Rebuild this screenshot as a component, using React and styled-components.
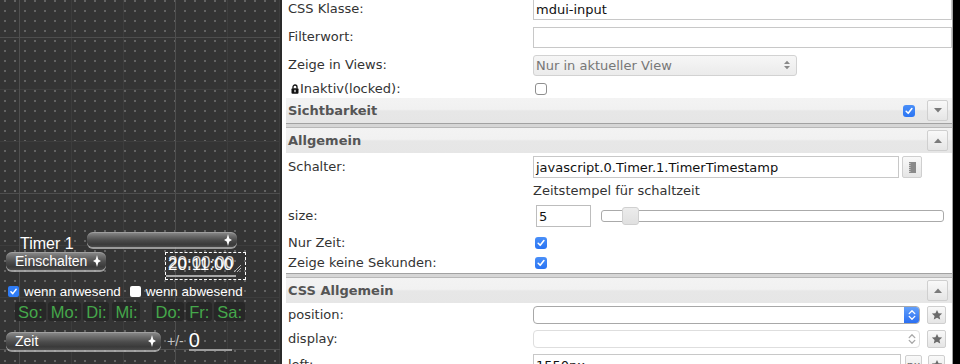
import React from "react";
import styled, { createGlobalStyle } from "styled-components";

const Global = createGlobalStyle`
  html, body { margin: 0; padding: 0; background: #000; overflow: hidden; }
  #root { width: 960px; height: 364px; }
`;

const Screen = styled.div`
  display: flex;
  width: 960px;
  height: 364px;
  overflow: hidden;
  background: #000;
`;

/* ---------- left: editor canvas ---------- */
const Canvas = styled.div`
  position: relative;
  width: 280px;
  height: 364px;
  flex: none;
  background-color: #343434;
  background-image:
    linear-gradient(to right, #4e4e4e 1px, transparent 1px),
    linear-gradient(to bottom, #4e4e4e 1px, transparent 1px),
    linear-gradient(to right, #3d3d3d 1px, transparent 1px),
    linear-gradient(to bottom, #3d3d3d 1px, transparent 1px),
    radial-gradient(circle, #636363 0.9px, transparent 1.3px);
  background-size: 156px 156px, 156px 156px, 52px 52px, 52px 52px, 10px 10px;
  background-position: 19px 0, 0 37px, 19px 0, 0 37px, 0 -4px;
  font-family: "Liberation Sans", Arial, sans-serif;
  color: #fff;
`;

const Widget = styled.div`
  position: absolute;
  left: 0;
  top: 231px;
  width: 250px;
  display: flex;
  flex-direction: column;
`;

const WRow = styled.div`
  display: flex;
  align-items: ${(p) => p.$align || "center"};
  height: ${(p) => p.$h}px;
  margin-top: ${(p) => p.$mt || 0}px;
`;

const TimerTitle = styled.div`
  width: 67px;
  margin: 5px 0 0 20px;
  font-size: 16px;
  line-height: 16px;
  white-space: nowrap;
`;

const DarkSelect = styled.div`
  box-sizing: border-box;
  width: ${(p) => p.$w}px;
  height: ${(p) => p.$h}px;
  margin-left: ${(p) => p.$ml || 0}px;
  margin-top: ${(p) => p.$mt || 0}px;
  padding: 0 5px 0 9px;
  display: flex;
  align-items: center;
  justify-content: space-between;
  border-radius: 6px;
  background: linear-gradient(
    to bottom,
    #8e8e8e 0%,
    #6a6a6a 28%,
    #4c4c4c 55%,
    #3a3a3a 82%,
    #4a4a4a 100%
  );
  box-shadow: inset 0 1px 0 rgba(255, 255, 255, 0.18),
    0 2px 0 rgba(190, 190, 190, 0.75);
  color: #fff;
  font-size: 14px;
  line-height: 14px;
`;

const TimeBox = styled.div`
  position: relative;
  box-sizing: border-box;
  width: 81px;
  height: 28px;
  margin-left: 59px;
  border: 1px dashed #fff;
`;

const TimeText = styled.span`
  position: absolute;
  left: 2px;
  top: ${(p) => p.$top}px;
  font-size: 17px;
  line-height: 17px;
  color: #fff;
  opacity: ${(p) => p.$o};
  white-space: nowrap;
`;

const TimeLine = styled.div`
  position: absolute;
  left: 0;
  right: 9px;
  bottom: 2px;
  height: 2px;
  background: #a9a9a9;
`;

const Grip = styled.svg`
  position: absolute;
  right: 4px;
  bottom: 7px;
`;

const CanvasCheck = styled.span`
  box-sizing: border-box;
  width: 11px;
  height: 11px;
  margin-left: ${(p) => p.$ml}px;
  border-radius: 2px;
  display: inline-flex;
  align-items: center;
  justify-content: center;
  background: ${(p) => (p.$on ? "#2f7cf6" : "#fff")};
`;

const CanvasLabel = styled.span`
  margin-left: 5px;
  font-size: 13.4px;
  color: #fff;
  white-space: nowrap;
`;

const Days = styled.div`
  display: flex;
  gap: 2px;
  padding-left: 15px;
  height: 19px;
`;

const DayBox = styled.div`
  display: flex;
  align-items: center;
  padding: 0 3px;
  margin-left: ${(p) => p.$ml || 0}px;
  border-radius: 3px;
  background: #272727;
  color: #45a84b;
  font-size: 16.5px;
  line-height: 16px;
`;

const PlusMinus = styled.span`
  margin-left: 6px;
  color: #c4c4c4;
  font-size: 14px;
`;

const ZeroField = styled.div`
  box-sizing: border-box;
  width: 43px;
  height: 20px;
  margin-left: 5px;
  border-bottom: 2px solid #9d9d9d;
  font-size: 20px;
  line-height: 18px;
  color: #fff;
`;

/* ---------- right: property panel ---------- */
const Panel = styled.div`
  flex: none;
  width: 670px;
  height: 364px;
  overflow: hidden;
  background: #fff;
  border-left: 2px solid #2a2a2a;
  border-right: 1px solid #a3a3a3;
  font-family: "DejaVu Sans", Verdana, sans-serif;
  font-size: 13px;
  color: #333;
`;

const PanelInner = styled.div`
  margin-top: -5px;
  padding-left: 4px;
  display: flex;
  flex-direction: column;
`;

const Row = styled.div`
  display: grid;
  grid-template-columns: 247px 1fr;
  align-items: ${(p) => p.$align || "center"};
  height: ${(p) => p.$h}px;
`;

const Label = styled.div`
  padding-left: ${(p) => p.$pl ?? 2}px;
  margin-top: ${(p) => p.$mt || 0}px;
  display: flex;
  align-items: center;
  gap: 1px;
  white-space: nowrap;
  line-height: 16px;
`;

const Cell = styled.div`
  display: flex;
  align-items: center;
  margin-top: ${(p) => p.$mt || 0}px;
`;

const TextInput = styled.div`
  box-sizing: border-box;
  width: ${(p) => p.$w}px;
  height: ${(p) => p.$h || 22}px;
  margin-left: ${(p) => p.$ml || 0}px;
  padding-left: 2px;
  display: flex;
  align-items: center;
  border: 1px solid ${(p) => p.$bc || "#c8c8c8"};
  background: #fff;
  color: #111;
  white-space: nowrap;
  overflow: hidden;
`;

const ViewSelect = styled.div`
  box-sizing: border-box;
  width: 264px;
  height: 21px;
  padding: 0 6px 0 2px;
  display: flex;
  align-items: center;
  justify-content: space-between;
  border: 1px solid #d2d2d2;
  border-radius: 3px;
  background: linear-gradient(to bottom, #f6f6f6, #ebebeb);
  color: #777;
`;

const MacSelect = styled.div`
  box-sizing: border-box;
  width: 387px;
  height: 18px;
  display: flex;
  justify-content: flex-end;
  border: 1px solid ${(p) => (p.$active ? "#a8a8a8" : "#dedede")};
  border-radius: 4px;
  background: #fff;
  overflow: hidden;
`;

const MacArrow = styled.div`
  width: 15px;
  display: flex;
  align-items: center;
  justify-content: center;
  background: ${(p) =>
    p.$active ? "linear-gradient(to bottom, #63a0fa, #2b6ff2)" : "transparent"};
`;

const SmallBtn = styled.div`
  box-sizing: border-box;
  width: ${(p) => p.$w}px;
  height: ${(p) => p.$h}px;
  margin-left: ${(p) => p.$ml || 0}px;
  display: flex;
  align-items: center;
  justify-content: center;
  border: 1px solid #cfcfcf;
  border-radius: 2px;
  background: linear-gradient(to bottom, #f9f9f9, #e5e5e5);
  color: #666;
  font-size: 11px;
`;

const Header = styled.div`
  box-sizing: border-box;
  height: 25px;
  display: flex;
  align-items: center;
  padding: 0 4px 0 2px;
  background: linear-gradient(
    to bottom,
    #f3f3f3 0%,
    #f1f1f1 45%,
    #e7e7e7 52%,
    #e6e6e6 100%
  );
  font-weight: bold;
  color: #555;
`;

const HeaderTitle = styled.span`
  flex: 1;
`;

const Separator = styled.div`
  box-sizing: border-box;
  height: 5px;
  background: #d6d6d6;
  border-top: 1px solid #a2a2a2;
  border-bottom: 1px solid #b8b8b8;
`;

const Check = styled.span`
  box-sizing: border-box;
  width: 12px;
  height: 12px;
  margin-left: ${(p) => p.$ml || 0}px;
  margin-right: ${(p) => p.$mr || 0}px;
  display: inline-flex;
  align-items: center;
  justify-content: center;
  border-radius: 3px;
  border: ${(p) => (p.$on ? "none" : "1px solid #8f8f8f")};
  background: ${(p) =>
    p.$on ? "linear-gradient(to bottom, #4a8ff8, #2a74f3)" : "#fff"};
`;

const Hint = styled.div`
  color: #333;
  white-space: nowrap;
`;

const Slider = styled.div`
  position: relative;
  box-sizing: border-box;
  width: 343px;
  height: 12px;
  margin-left: 10px;
  border: 1px solid #aaa;
  border-radius: 3px;
  background: #fff;
`;

const Handle = styled.div`
  position: absolute;
  left: 20px;
  top: -4px;
  box-sizing: border-box;
  width: 17px;
  height: 18px;
  border: 1px solid #d0d0d0;
  border-radius: 3px;
  background: linear-gradient(to bottom, #ececec, #e0e0e0);
`;

/* ---------- icons ---------- */
const UpDown = () => (
  <svg width="8" height="12" viewBox="0 0 8 12">
    <path d="M4 0 L5.3 4.6 L8 6 L5.3 7.4 L4 12 L2.7 7.4 L0 6 L2.7 4.6 Z" fill="#fff" />
  </svg>
);

const Tick = ({ s = 12 }) => (
  <svg width={s} height={s} viewBox="0 0 12 12">
    <path d="M3.2 6.3 L5.2 8.3 L8.9 3.6" stroke="#fff" strokeWidth="1.6" fill="none" strokeLinecap="round" strokeLinejoin="round" />
  </svg>
);

const Tri = ({ up }) => (
  <svg width="8" height="5" viewBox="0 0 8 5">
    <path d={up ? "M0 5 L4 0.5 L8 5 Z" : "M0 0 L8 0 L4 4.5 Z"} fill="#7a7a7a" />
  </svg>
);

const Lock = () => (
  <svg width="8" height="10" viewBox="0 0 8 10">
    <path d="M2 4.5 V3 a2 2 0 0 1 4 0 V4.5" stroke="#111" strokeWidth="1.3" fill="none" />
    <rect x="0.5" y="4.3" width="7" height="5.5" rx="1" fill="#111" />
    <rect x="3.4" y="5.8" width="1.2" height="2.4" fill="#fff" />
  </svg>
);

const SmallUpDown = ({ c = "#888" }) => (
  <svg width="6" height="10" viewBox="0 0 6 10">
    <path d="M0 4 L3 0.8 L6 4 Z M0 6 L3 9.2 L6 6 Z" fill={c} />
  </svg>
);

const Chevrons = ({ c }) => (
  <svg width="8" height="12" viewBox="0 0 8 12">
    <path d="M1.2 4.6 L4 1.8 L6.8 4.6 M1.2 7.4 L4 10.2 L6.8 7.4" stroke={c} strokeWidth="1.3" fill="none" strokeLinecap="round" strokeLinejoin="round" />
  </svg>
);

const Star = () => (
  <svg width="12" height="12" viewBox="0 0 24 24">
    <path d="M12 1.8 L15.1 8.4 L22.3 9.2 L16.9 14.1 L18.4 21.2 L12 17.6 L5.6 21.2 L7.1 14.1 L1.7 9.2 L8.9 8.4 Z" fill="#6b6b6b" />
  </svg>
);

const ListIcon = () => (
  <svg width="7" height="11" viewBox="0 0 7 11">
    <rect x="0" y="0" width="7" height="11" fill="#8a8a8a" />
    <path d="M0 1.5 H1.5 M0 3.5 H1.5 M0 5.5 H1.5 M0 7.5 H1.5 M0 9.5 H1.5" stroke="#d8d8d8" strokeWidth="0.9" />
  </svg>
);

const days = [
  { t: "So:" },
  { t: "Mo:" },
  { t: "Di:" },
  { t: "Mi:", ml: 1 },
  { t: "Do:", ml: 10 },
  { t: "Fr:" },
  { t: "Sa:" },
];

export default function App() {
  return (
    <>
      <Global />
      <Screen>
        <Canvas>
          <Widget>
            <WRow $h={21} $align="flex-start">
              <TimerTitle>Timer 1</TimerTitle>
              <DarkSelect $w={150} $h={15} $mt={1}>
                <span />
                <UpDown />
              </DarkSelect>
            </WRow>
            <WRow $h={32} $align="flex-start">
              <DarkSelect $w={100} $h={18} $ml={6}>
                <span>Einschalten</span>
                <UpDown />
              </DarkSelect>
              <TimeBox>
                <TimeText $top={1} $o={0.85}>20:00:00</TimeText>
                <TimeText $top={3} $o={1}>20:11:00</TimeText>
                <TimeLine />
                <Grip width="7" height="7" viewBox="0 0 7 7">
                  <path d="M7 0 L0 7 M7 3 L3 7 M7 5.5 L5.5 7" stroke="#b5b5b5" strokeWidth="1" />
                </Grip>
              </TimeBox>
            </WRow>
            <WRow $h={15}>
              <CanvasCheck $on $ml={8}>
                <Tick s={11} />
              </CanvasCheck>
              <CanvasLabel>wenn anwesend</CanvasLabel>
              <CanvasCheck $ml={9} />
              <CanvasLabel>wenn abwesend</CanvasLabel>
            </WRow>
            <WRow $h={19} $mt={3}>
              <Days>
                {days.map((d) => (
                  <DayBox key={d.t} $ml={d.ml}>
                    {d.t}
                  </DayBox>
                ))}
              </Days>
            </WRow>
            <WRow $h={20} $mt={10}>
              <DarkSelect $w={155} $h={18} $ml={6}>
                <span>Zeit</span>
                <UpDown />
              </DarkSelect>
              <PlusMinus>+/-</PlusMinus>
              <ZeroField>0</ZeroField>
            </WRow>
          </Widget>
        </Canvas>

        <Panel>
          <PanelInner>
            <Row $h={28}>
              <Label>CSS Klasse:</Label>
              <Cell>
                <TextInput $w={419}>mdui-input</TextInput>
              </Cell>
            </Row>
            <Row $h={28}>
              <Label>Filterwort:</Label>
              <Cell>
                <TextInput $w={419} $h={21} />
              </Cell>
            </Row>
            <Row $h={28}>
              <Label>Zeige in Views:</Label>
              <Cell>
                <ViewSelect>
                  <span>Nur in aktueller View</span>
                  <SmallUpDown />
                </ViewSelect>
              </Cell>
            </Row>
            <Row $h={19}>
              <Label $pl={5}>
                <Lock />
                <span>Inaktiv(locked):</span>
              </Label>
              <Cell>
                <Check $ml={2} />
              </Cell>
            </Row>

            <Header>
              <HeaderTitle>Sichtbarkeit</HeaderTitle>
              <Check $on $mr={12}>
                <Tick />
              </Check>
              <SmallBtn $w={21} $h={21}>
                <Tri />
              </SmallBtn>
            </Header>
            <Separator />
            <Header>
              <HeaderTitle>Allgemein</HeaderTitle>
              <SmallBtn $w={21} $h={21}>
                <Tri up />
              </SmallBtn>
            </Header>

            <Row $h={28}>
              <Label>Schalter:</Label>
              <Cell>
                <TextInput $w={366}>javascript.0.Timer.1.TimerTimestamp</TextInput>
                <SmallBtn $w={20} $h={22} $ml={3}>
                  <ListIcon />
                </SmallBtn>
              </Cell>
            </Row>
            <Row $h={18}>
              <span />
              <Hint>Zeitstempel für schaltzeit</Hint>
            </Row>
            <Row $h={34}>
              <Label>size:</Label>
              <Cell>
                <TextInput $w={55} $ml={3} $bc="#bdbdbd">
                  5
                </TextInput>
                <Slider>
                  <Handle />
                </Slider>
              </Cell>
            </Row>
            <Row $h={20}>
              <Label>Nur Zeit:</Label>
              <Cell>
                <Check $on $ml={2}>
                  <Tick />
                </Check>
              </Cell>
            </Row>
            <Row $h={20}>
              <Label>Zeige keine Sekunden:</Label>
              <Cell>
                <Check $on $ml={2}>
                  <Tick />
                </Check>
              </Cell>
            </Row>
            <Separator />
            <Header>
              <HeaderTitle>CSS Allgemein</HeaderTitle>
              <SmallBtn $w={21} $h={21}>
                <Tri up />
              </SmallBtn>
            </Header>

            <Row $h={23}>
              <Label>position:</Label>
              <Cell>
                <MacSelect $active>
                  <MacArrow $active>
                    <Chevrons c="#fff" />
                  </MacArrow>
                </MacSelect>
                <SmallBtn $w={19} $h={18} $ml={7}>
                  <Star />
                </SmallBtn>
              </Cell>
            </Row>
            <Row $h={25}>
              <Label>display:</Label>
              <Cell>
                <MacSelect>
                  <MacArrow>
                    <Chevrons c="#a8a8a8" />
                  </MacArrow>
                </MacSelect>
                <SmallBtn $w={19} $h={18} $ml={7}>
                  <Star />
                </SmallBtn>
              </Cell>
            </Row>
            <Row $h={30} $align="start">
              <Label $mt={6}>left:</Label>
              <Cell $mt={3}>
                <TextInput $w={368}>1550px</TextInput>
                <SmallBtn $w={17} $h={20} $ml={4}>
                  px
                </SmallBtn>
                <SmallBtn $w={17} $h={20} $ml={6}>
                  <Star />
                </SmallBtn>
              </Cell>
            </Row>
          </PanelInner>
        </Panel>
      </Screen>
    </>
  );
}
